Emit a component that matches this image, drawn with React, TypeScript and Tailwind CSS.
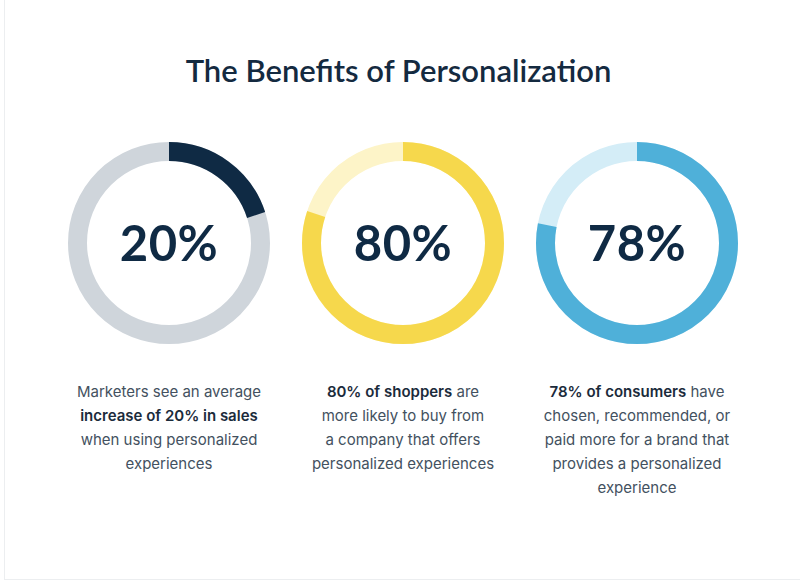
import React from 'react';

type Stat = {
  value: number;
  color: string;
  track: string;
  lines: React.ReactNode[];
};

const STATS: Stat[] = [
  {
    value: 20,
    color: '#0f2a44',
    track: '#cfd5db',
    lines: [
      'Marketers see an average',
      <b key="b" className="font-semibold text-[#1b2b3b]">increase of 20% in sales</b>,
      'when using personalized',
      'experiences',
    ],
  },
  {
    value: 80,
    color: '#f6d84c',
    track: '#fdf4c8',
    lines: [
      <><b className="font-semibold text-[#1b2b3b]">80% of shoppers</b> are</>,
      'more likely to buy from',
      'a company that offers',
      'personalized experiences',
    ],
  },
  {
    value: 78,
    color: '#4fb0d9',
    track: '#d4edf7',
    lines: [
      <><b className="font-semibold text-[#1b2b3b]">78% of consumers</b> have</>,
      'chosen, recommended, or',
      'paid more for a brand that',
      'provides a personalized',
      'experience',
    ],
  },
];

function Donut({ value, color, track }: { value: number; color: string; track: string }) {
  const size = 202;
  const stroke = 19;
  const r = (size - stroke) / 2;
  const c = 2 * Math.PI * r;
  return (
    <div className="relative w-[202px] h-[202px]">
      <svg width={size} height={size} viewBox={`0 0 ${size} ${size}`} className="-rotate-90">
        <circle cx={size / 2} cy={size / 2} r={r} fill="none" stroke={track} strokeWidth={stroke} />
        <circle
          cx={size / 2}
          cy={size / 2}
          r={r}
          fill="none"
          stroke={color}
          strokeWidth={stroke}
          strokeDasharray={`${(c * value) / 100} ${c}`}
        />
      </svg>
      <div className="absolute inset-0 flex items-center justify-center text-[49px] font-bold text-[#0f2a44] tracking-[0.5px]">
        {value}%
      </div>
    </div>
  );
}

export default function App() {
  return (
    <div className="w-[800px] h-[583px] bg-white overflow-hidden" style={{ fontFamily: 'Lato, "Noto Sans", sans-serif' }}>
      <div className="ml-1 w-[810px] h-[580px] border-l border-b border-[#eceef0] bg-white">
        <h1 className="pt-[52px] pr-[22px] text-center text-[31px] leading-[36px] font-semibold text-[#142a40]">
          The Benefits of Personalization
        </h1>
        <div className="mt-[54px] pl-[47px] grid grid-cols-[234px_234px_234px]">
          {STATS.map((s, i) => (
            <div key={i} className="flex flex-col items-center">
              <Donut value={s.value} color={s.color} track={s.track} />
              <p
                className="mt-[36px] text-center text-[15px] leading-[24px] text-[#435160]"
                style={{ fontFamily: 'Inter, "Noto Sans", sans-serif' }}
              >
                {s.lines.map((l, j) => (
                  <span key={j} className="block whitespace-nowrap">{l}</span>
                ))}
              </p>
            </div>
          ))}
        </div>
      </div>
    </div>
  );
}
